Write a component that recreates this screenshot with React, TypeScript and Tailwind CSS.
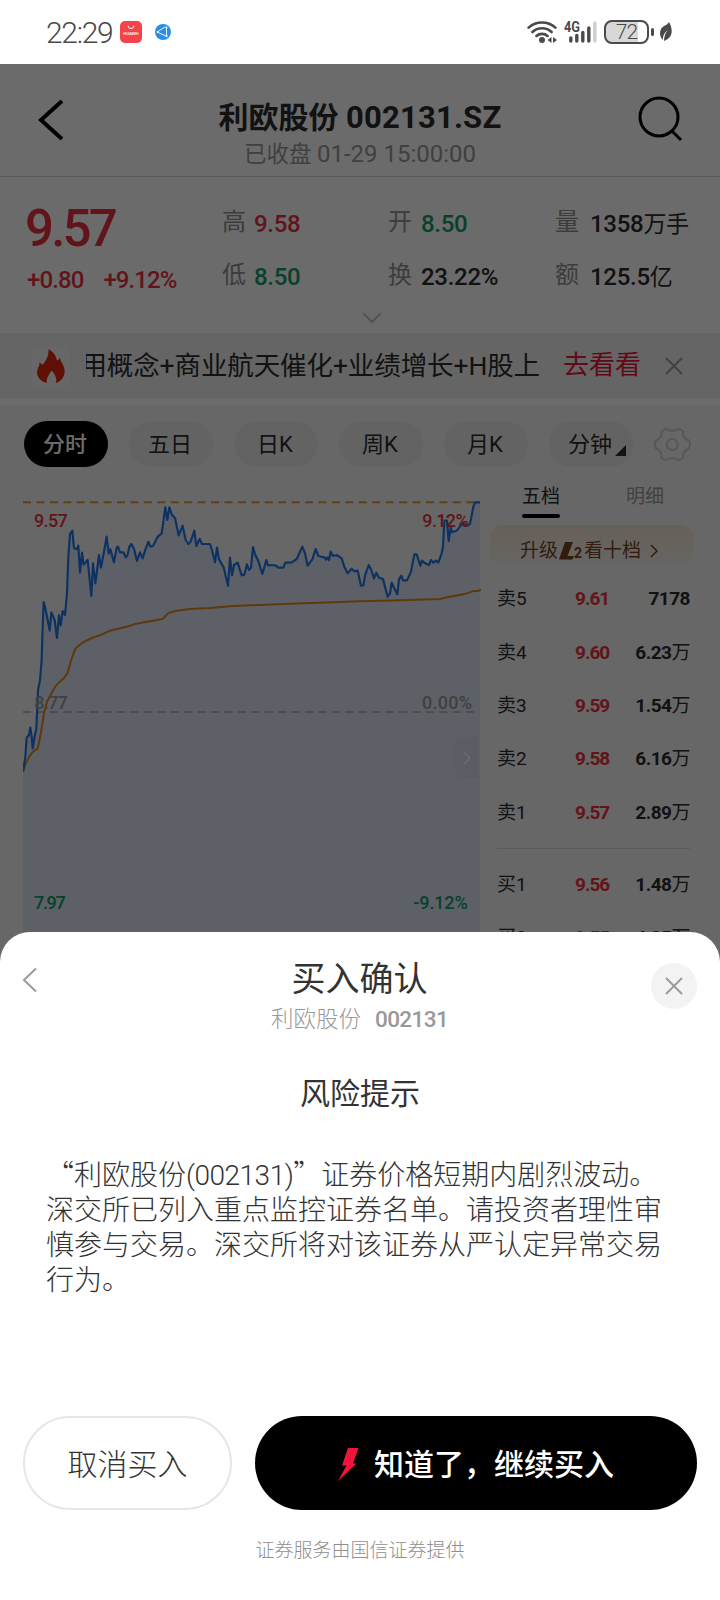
import { ReactNode } from "react";
import clsx from "clsx";

// Chart coordinates are in thirds of a pixel
const PRICE =
  "69,1115 76,1070 80,1013 87,1005 91,983 95,1010 98,1045 104,1010 109,985 113,900 114,870 120,840 125,780 127,710 131,606 137,630 143,660 149,692 154,637 164,660 171,714 177,645 182,676 188,633 195,645 201,580 205,470 210,402 217,392 222,445 230,447 235,437 240,517 246,458 251,494 263,480 274,588 279,490 286,550 297,465 303,503 312,455 320,410 326,460 331,448 342,487 350,443 354,440 360,457 371,457 377,472 382,467 388,440 394,432 402,447 411,483 420,457 428,475 434,455 445,425 451,440 459,438 473,410 485,400 496,322 502,360 508,322 516,345 525,354 536,406 548,377 557,420 565,432 572,425 583,392 589,438 599,417 606,432 630,432 636,450 645,487 651,443 657,478 671,502 684,557 690,473 696,526 702,495 713,488 725,526 733,524 741,493 747,510 753,503 759,441 765,463 775,483 787,522 799,480 804,496 815,495 828,497 835,503 850,503 856,488 875,487 890,477 907,440 915,460 923,497 937,478 947,447 955,468 975,473 978,479 983,472 987,480 992,455 999,468 1010,465 1025,475 1033,500 1043,520 1055,506 1063,514 1073,512 1083,557 1090,556 1095,527 1106,495 1114,510 1122,535 1129,518 1137,533 1149,537 1155,560 1163,590 1170,580 1175,548 1183,565 1192,583 1197,538 1204,527 1209,541 1221,541 1233,515 1243,463 1250,463 1261,497 1266,482 1273,488 1287,495 1293,480 1300,488 1308,482 1315,488 1325,460 1329,440 1333,362 1341,362 1346,423 1352,383 1357,397 1370,392 1390,368 1400,378 1410,372 1420,320 1425,307 1440,307";
const AVERAGE =
  "69,1115 78,1088 88,1070 98,1056 113,1045 119,1018 125,985 133,935 141,905 149,890 165,860 180,845 192,834 203,818 212,785 225,748 235,738 247,728 275,714 305,704 330,692 385,679 405,672 450,664 488,657 503,641 515,636 530,632 570,627 630,624 700,618 850,612 1080,604 1200,601 1320,597 1345,591 1390,583 1410,577 1420,573 1435,573 1443,569";

const PERIODS = ["分时", "五日", "日K", "周K", "月K", "分钟"];

const SELL = [
  ["卖5", "9.61", "7178", ""],
  ["卖4", "9.60", "6.23", "万"],
  ["卖3", "9.59", "1.54", "万"],
  ["卖2", "9.58", "6.16", "万"],
  ["卖1", "9.57", "2.89", "万"],
];
const BUY = [
  ["买1", "9.56", "1.48", "万"],
  ["买2", "9.55", "4.35", "万"],
];

function StatusBar() {
  return (
    <div className="flex h-16 shrink-0 items-center bg-white pl-[46px] pr-[48px] text-[#4a4a4a]">
      <span className="w-[74px] text-[30px] font-light tracking-[-1.3px]">22:29</span>
      <svg className="h-[22px] w-[22px]" viewBox="0 0 22 22">
        <rect width="22" height="22" rx="5" fill="#f5434b" />
        <path d="M8 4.5a3 3 0 0 0 6 0" fill="none" stroke="#fff" strokeWidth="1" />
        <text x="11" y="14" fontSize="4.2" fontWeight="500" fill="#fff" textAnchor="middle">HUAWEI</text>
      </svg>
      <svg className="ml-[13px] h-4 w-4" viewBox="0 0 16 16">
        <circle cx="8" cy="8" r="8" fill="#2a8de8" />
        <path d="M2 8l8-5M2 8l9 4M11.500 4v7" fill="none" stroke="#fff" strokeWidth="0.900" />
        <circle cx="2.500" cy="8" r="1" fill="#fff" />
        <circle cx="11.400" cy="3.600" r="1" fill="#fff" />
        <circle cx="11.600" cy="12" r="1" fill="#fff" />
      </svg>
      <svg className="ml-auto h-[24px] w-[30px]" viewBox="0 0 30 24">
        <g fill="none" stroke="#4a4a4a" strokeWidth="2.600" strokeLinecap="round">
          <path d="M1.600 7.600a20 20 0 0 1 26.800 0" />
          <path d="M5.400 12a14 14 0 0 1 19.200 0" />
          <path d="M9.400 16a8.500 8.500 0 0 1 11.200 0" />
        </g>
        <circle cx="15" cy="20" r="3" fill="#4a4a4a" />
        <path d="M24.500 17v6l-4-3zM26 17v6l4-3z" fill="#4a4a4a" />
      </svg>
      <svg className="ml-[7px] h-[24px] w-[33px]" viewBox="0 0 33 24">
        <text x="0" y="12" fontSize="14.500" fontWeight="700" fill="#4a4a4a" textLength="16" lengthAdjust="spacingAndGlyphs">4G</text>
        <g stroke="#4a4a4a" strokeWidth="3.400" strokeLinecap="round">
          <path d="M6.800 18v3M12.800 15.500V21M18.800 12.500V21M24.800 8V21" />
          <path d="M30.800 3V21" stroke="#cfcfcf" />
        </g>
      </svg>
      <div className="ml-[7px] flex h-6 w-[45px] items-center justify-center rounded-[8px] border-2 border-[#4a4a4a] bg-linear-to-r from-[#d8d8d8] from-78% to-white to-78% text-[21px] font-light leading-none tracking-[-1px]">
        72
      </div>
      <div className="ml-[2px] h-[8px] w-[3px] rounded-full bg-[#4a4a4a]" />
      <svg className="ml-[6px] h-[20px] w-[12px]" viewBox="0 0 12 20">
        <path d="M9 0c4 7 4 15-3 18l-2 1c0-4 1-8 4-11-4 3-5 6-5.200 10C-2 13 0 6 4 4c2-1 4-2 5-4z" fill="#4a4a4a" />
      </svg>
    </div>
  );
}

function Header() {
  return (
    <div className="flex h-[113px] shrink-0 items-start border-b border-[#d4d4d4] pl-[38px] pr-[36px]">
      <svg className="mt-[36px] h-10 w-[26px]" viewBox="0 0 26 40">
        <path d="M24 1L3 20l21 19" fill="none" stroke="#000" strokeWidth="4" />
      </svg>
      <div className="ml-[20px] mt-[33px] flex-1 text-center">
        <h1 className="text-[30px] font-bold leading-[42px] text-[#2c2c2c]">
          利欧股份 <span className="text-[31px] tracking-[0.2px]">002131.SZ</span>
        </h1>
        <p className="text-[22.5px] leading-[30px] text-[#999]">
          已收盘 <span className="text-[24px]">01-29 15:00:00</span>
        </p>
      </div>
      <svg className="mt-[31px] h-12 w-12" viewBox="0 0 48 48">
        <circle cx="23" cy="22" r="19" fill="none" stroke="#000" strokeWidth="3" />
        <path d="M35 35l10 10" stroke="#000" strokeWidth="3" />
      </svg>
    </div>
  );
}

function Stat({ label, labelWidth = "w-8", children, tone }: { label: string; labelWidth?: string; children: ReactNode; tone: string }) {
  return (
    <div className="flex h-[53px] items-center">
      <span className={clsx("text-2xl text-[#8f8f8f]", labelWidth)}>{label}</span>
      <span className={clsx("pt-[5px] text-2xl font-medium tracking-[-0.3px]", tone)}>{children}</span>
    </div>
  );
}

function Quote() {
  return (
    <div className="flex h-[156px] shrink-0 flex-col">
      <div className="flex h-[125px] pl-[25px] pt-[18px]">
        <div className="w-[197px] font-medium text-[#e83442]">
          <div className="h-[66px] text-[51px] leading-[68px] tracking-[-2.8px]">9.57</div>
          <div className="flex gap-[20px] pl-[2px] text-2xl leading-[38px] tracking-[-0.900px]">
            <span>+0.80</span>
            <span>+9.12%</span>
          </div>
        </div>
        <div className="w-[166px]">
          <Stat label="高" tone="text-[#e83442]">9.58</Stat>
          <Stat label="低" tone="text-[#0f9d6a]">8.50</Stat>
        </div>
        <div className="w-[167px]">
          <Stat label="开" tone="text-[#0f9d6a]" labelWidth="w-[33px]">8.50</Stat>
          <Stat label="换" tone="text-[#2c2c2c]" labelWidth="w-[33px]">23.22%</Stat>
        </div>
        <div>
          <Stat label="量" tone="text-[#2c2c2c]" labelWidth="w-[35px]">
            1358<span className="text-[23px] font-normal">万手</span>
          </Stat>
          <Stat label="额" tone="text-[#2c2c2c]" labelWidth="w-[35px]">
            125.5<span className="text-[23px] font-normal">亿</span>
          </Stat>
        </div>
      </div>
      <svg className="ml-[362px] mt-[10px] h-3 w-5" viewBox="0 0 20 12">
        <path d="M1 1l9 9 9-9" fill="none" stroke="#c4c4c4" strokeWidth="2" />
      </svg>
    </div>
  );
}

function NewsBar() {
  return (
    <div className="flex h-[65px] shrink-0 items-center bg-[#f0f0f0] pl-8 pr-[37px]">
      <div className="flex h-10 w-[38px] items-center justify-center bg-[#f6f6f6]">
        <svg className="h-[34px] w-[28px]" viewBox="0 0 28 34">
          <path
            d="M11.500 0c5 3 8 7 8.300 11.500 1.600-.7 2.700-1.700 3.200-3 .2 3 1.500 5 3.500 8.500 2.800 6.500.5 14-7.500 17 1-5.500-1-9-4.500-12.500C13 25 9 28 9.800 34 1 31.500-1.500 25 1 19c1.200-2 1.500-3 1.300-5.300C3.800 14 4.800 14.700 5.500 16c3.500-4.500 6.500-9 6-16z"
            fill="#e02810"
          />
        </svg>
      </div>
      <div className="ml-4 flex w-[454px] justify-end overflow-hidden whitespace-nowrap text-[26.5px] tracking-[-0.1px] text-[#2c2c2c]">
        用概念+商业航天催化+业绩增长+H股上
      </div>
      <span className="ml-[23px] text-[26px] text-[#ec1438]">去看看</span>
      <svg className="ml-auto h-[18px] w-[18px]" viewBox="0 0 18 18">
        <path d="M1 1l16 16M17 1L1 17" stroke="#9c9c9c" strokeWidth="2" />
      </svg>
    </div>
  );
}

function PeriodTabs() {
  return (
    <div className="flex h-[62px] items-center gap-[21px] pl-6 pt-4">
      {PERIODS.map((p, i) => (
        <div
          key={p}
          className={clsx(
            "relative flex h-[46px] w-[84px] items-center justify-center rounded-full pr-[2px] text-[22px]",
            i === 0 ? "bg-black font-medium text-white" : "bg-[#ebebeb] text-[#2c2c2c]",
          )}
        >
          {p}
          {p === "分钟" && (
            <svg className="absolute bottom-[11px] right-[7px] h-[11px] w-[11px]" viewBox="0 0 11 11">
              <path d="M11 0v11H0z" fill="#2c2c2c" />
            </svg>
          )}
        </div>
      ))}
      <svg className="h-[35px] w-[37px]" viewBox="0 0 37 35" fill="none" stroke="#cfcfcf" strokeWidth="2" strokeLinejoin="round">
        <path d="M12 1.500C14.500 4.500 22 4.500 24.500 1.500L29 4c-.5 5 1.500 8 6 9.500q2 4 0 8c-4.500 1.500-6.500 4.500-6 9.500l-4.500 2.500c-2.500-3-10-3-12.500 0L7.500 31c.5-5-1.500-8-5.500-9.500q-2-4 0-8C6 12 8 9 7.500 4z" />
        <circle cx="18.250" cy="17.500" r="5.500" />
      </svg>
    </div>
  );
}

function Chart() {
  return (
    <div className="relative ml-[23px] mt-6 h-[442px] w-[458px]">
      <svg className="h-[442px] w-[458px]" viewBox="69 273 1374 1326">
        <polygon points={`69,1600 ${PRICE} 1440,1600`} fill="#dde4f5" />
        <g fill="none" strokeWidth="6">
          <path d="M69 306.500H1440" stroke="#f0962c" strokeDasharray="24 16.300" />
          <path d="M69 936H1432" stroke="#a8a8ae" strokeDasharray="24 16.300" strokeWidth="5" />
          <polyline points={AVERAGE} stroke="#e08818" strokeLinejoin="round" />
          <polyline points={PRICE} stroke="#2078ea" strokeLinejoin="round" strokeWidth="6.500" />
        </g>
        <g fontSize="54" fontWeight="500">
          <g fill="#e83442">
            <text x="102" y="381" textLength="101">9.57</text>
            <text x="1267" y="381" textLength="139">9.12%</text>
          </g>
          <g fill="#9a9a9a">
            <text x="103" y="927" textLength="100">8.77</text>
            <text x="1266" y="927" textLength="150">0.00%</text>
          </g>
          <g fill="#0f9d6a">
            <text x="102" y="1527" textLength="95">7.97</text>
            <text x="1240" y="1527" textLength="163">-9.12%</text>
          </g>
        </g>
      </svg>
      {/* Collapse handle */}
      <div className="absolute right-[2px] top-[246px] flex h-[41px] w-[24px] items-center justify-center rounded-l-lg bg-[#d7deee]">
        <svg className="h-[14px] w-2" viewBox="0 0 8 14">
          <path d="M1 1l6 6-6 6" fill="none" stroke="#fff" strokeWidth="1.500" />
        </svg>
      </div>
    </div>
  );
}

function Level({ row }: { row: string[] }) {
  const [name, price, amount, unit] = row;
  return (
    <div className="flex h-[53.3px] items-center text-[19px] text-[#2c2c2c]">
      <span className="w-[78px]">{name}</span>
      <span className="font-bold tracking-[-1px] text-[#e83442]">{price}</span>
      <span className="ml-auto font-bold tracking-[-0.5px]">
        {amount}
        <span className="font-normal">{unit}</span>
      </span>
    </div>
  );
}

function OrderBook() {
  return (
    <div className="ml-[9px] mt-3 w-[203px] text-[19px]">
      <div className="flex h-[46px] items-start pl-8">
        <div className="flex w-[38px] flex-col items-center text-[#2c2c2c]">
          <span className="h-[35px] leading-[36px]">五档</span>
          <span className="h-1 w-[38px] rounded-full bg-black" />
        </div>
        <span className="ml-[66px] leading-[36px] text-[#9a9a9a]">明细</span>
      </div>
      <div className="flex h-10 items-center rounded-xl bg-linear-to-b from-[#f2e4d2] to-[#f4f2f0] pl-[30px] pt-[12px] text-[#794422]">
        升级
        <svg className="ml-[1px] h-[18px] w-[15px]" viewBox="0 0 15 18">
          <path d="M6 0h8L8.500 14H15l-1.500 3.500H0z" fill="#794422" />
        </svg>
        <span className="mr-[2px] pt-1 text-[14px] font-bold leading-none">2</span>
        看十档
        <svg className="ml-[9px] h-[14px] w-2" viewBox="0 0 8 14">
          <path d="M1 1l6 6-6 6" fill="none" stroke="#794422" strokeWidth="1.500" />
        </svg>
      </div>
      <div className="pl-[7px] pr-[3px] pt-[8px]">
        {SELL.map((row) => (
          <Level key={row[0]} row={row} />
        ))}
        <div className="mb-[9px] mt-[9px] h-px bg-[#dadada]" />
        {BUY.map((row) => (
          <Level key={row[0]} row={row} />
        ))}
      </div>
    </div>
  );
}

function ConfirmSheet() {
  return (
    <div className="absolute bottom-0 left-0 flex h-[668px] w-[720px] flex-col rounded-t-[30px] bg-white text-[#333]">
      <div className="flex items-start justify-between pl-[22px] pr-[23px] pt-[25px]">
        <svg className="mt-[11px] h-6 w-[46px]" viewBox="0 0 46 24">
          <path d="M14 0.500L2 12l12 11.500" fill="none" stroke="#999" strokeWidth="2" />
        </svg>
        <div className="text-center">
          <h2 className="text-[34px] leading-[44px]">买入确认</h2>
          <p className="flex items-center gap-[14px] text-[22.5px] leading-[37px] text-[#999]">
            <span className="font-light">利欧股份</span>
            <span className="font-medium tracking-[-0.6px]">002131</span>
          </p>
        </div>
        <div className="mt-[6px] flex h-[46px] w-[46px] items-center justify-center rounded-full bg-[#f3f3f3]">
          <svg className="h-[18px] w-[18px]" viewBox="0 0 18 18">
            <path d="M1 1l16 16M17 1L1 17" stroke="#999" strokeWidth="1.800" />
          </svg>
        </div>
      </div>
      <h3 className="mt-[34px] text-center text-[30px] leading-[44px]">风险提示</h3>
      <p className="ml-[46px] mt-[40px] w-[630px] text-[28px] font-light leading-[35px]">
        <span className="font-['Noto_Sans_CJK_SC',sans-serif]">“</span>利欧股份
        <span className="tracking-[-0.5px]">(002131)</span>
        <span className="font-['Noto_Sans_CJK_SC',sans-serif]">”</span>证券价格短期内剧烈波动。
        <br />
        深交所已列入重点监控证券名单。请投资者理性审
        <br />
        慎参与交易。深交所将对该证券从严认定异常交易
        <br />
        行为。
      </p>
      <div className="mt-auto flex gap-[23px] px-[23px]">
        <button className="h-[94px] w-[209px] rounded-full border-2 border-[#e6e6e6] pt-[2px] text-[30px] font-light">取消买入</button>
        <button className="flex h-[94px] w-[442px] items-center justify-center rounded-full bg-black pt-[2px] text-[30px] font-medium text-white">
          <svg className="mr-[15px] h-[33px] w-[21px]" viewBox="0 0 21 33">
            <path d="M10 0h10.500l-5.500 15.500h3.500L0 33l8.500-15.500H4z" fill="#f0143c" />
          </svg>
          知道了，继续买入
        </button>
      </div>
      <p className="mb-[33px] mt-[25px] text-center text-[19px] font-light leading-8 text-[#8f8f8f]">证券服务由国信证券提供</p>
    </div>
  );
}

export default function App() {
  return (
    <div lang="zh-CN" className="relative flex h-[1600px] w-[720px] flex-col overflow-hidden bg-white font-[Roboto,'Noto_Sans_CJK_SC',sans-serif]">
      <StatusBar />
      <Header />
      <Quote />
      <NewsBar />
      <div className="mt-[7px] flex-1 bg-[#f5f5f5]">
        <PeriodTabs />
        <div className="flex">
          <Chart />
          <OrderBook />
        </div>
      </div>
      {/* Dim layer below the status bar */}
      <div className="absolute inset-x-0 bottom-0 top-16 bg-black/58" />
      <ConfirmSheet />
    </div>
  );
}
